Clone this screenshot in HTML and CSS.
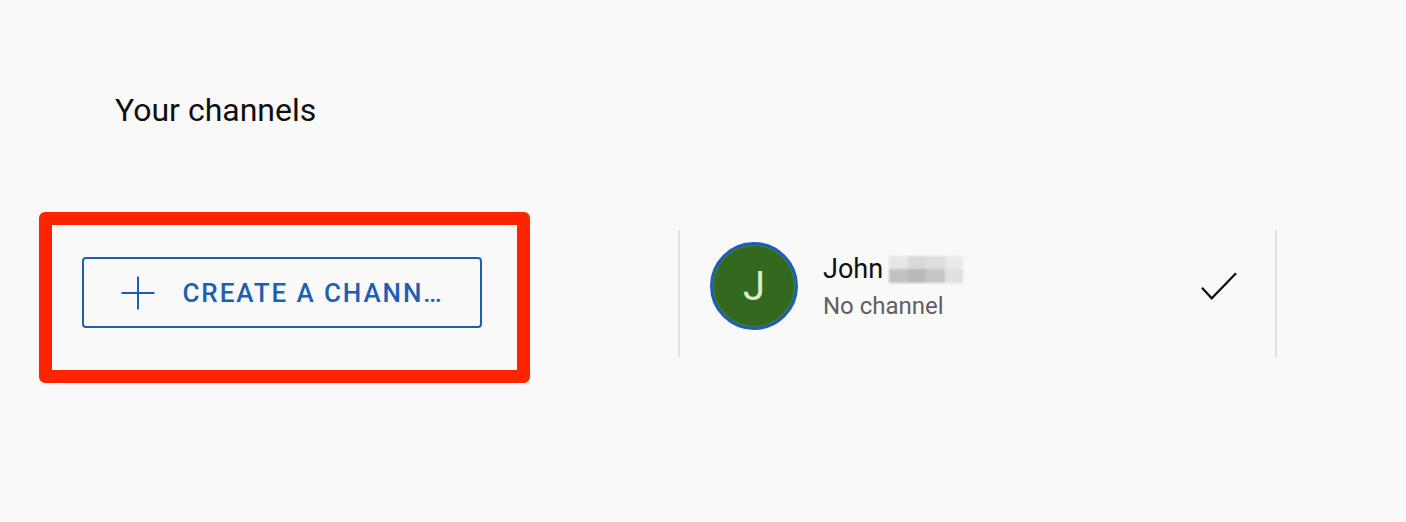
FILE: index.html
```html
<!DOCTYPE html>
<html lang="en">
<head>
<meta charset="utf-8">
<title>Your channels</title>
<link rel="stylesheet" href="styles.css">
</head>
<body>
<main class="page">
  <h1 class="title">Your channels</h1>
  <div class="row">
    <div class="annot">
      <button class="create-btn" type="button">
        <svg class="plus" width="34" height="34" viewBox="0 0 34 34" aria-hidden="true">
          <path d="M17 0.5V33.5M0.5 17H33.5" stroke="currentColor" stroke-width="2" fill="none"/>
        </svg>
        <span class="create-label">CREATE A CHANN…</span>
      </button>
    </div>
    <div class="account-card">
      <div class="avatar"><span>J</span></div>
      <div class="account-info">
        <div class="account-name">John <span class="blur" aria-hidden="true"><i></i><i></i><i></i><i></i><i></i><i></i><i></i><i></i></span></div>
        <div class="account-sub">No channel</div>
      </div>
      <svg class="check" width="36" height="28" viewBox="0 0 36 28" aria-hidden="true">
        <path d="M1 15.7L10.7 26.3L35 1.3" stroke="#0f0f0f" stroke-width="2.2" fill="none"/>
      </svg>
    </div>
  </div>
</main>
</body>
</html>
```

FILE: styles.css
```css
html, body {
  margin: 0;
  padding: 0;
  background: #f9f9f9;
}

body {
  font-family: Roboto, "Noto Sans", Arial, sans-serif;
  color: #0f0f0f;
  width: 1406px;
  height: 522px;
  overflow: hidden;
}

.page {
  display: flex;
  flex-direction: column;
}

.title {
  margin: 0;
  padding: 90px 0 0 115px;
  font-size: 32px;
  line-height: 40px;
  font-weight: 400;
  color: #0f0f0f;
}

.row {
  display: flex;
  align-items: flex-start;
  margin-top: 82px;
}

.annot {
  box-sizing: border-box;
  margin-left: 39px;
  width: 491px;
  height: 171px;
  border: 13.5px solid #ff2400;
  border-radius: 6px;
  padding: 32px 0 0 29.5px;
}

.create-btn {
  box-sizing: border-box;
  display: flex;
  align-items: center;
  width: 400px;
  height: 71px;
  padding: 0 0 0 37px;
  border: 2px solid #1f5fb3;
  border-radius: 4px;
  background: transparent;
  color: #1c5fb6;
  font-family: Roboto, "Noto Sans", Arial, sans-serif;
  cursor: pointer;
}

.plus {
  flex: none;
  color: #1d5db0;
}

.create-label {
  margin-left: 28px;
  font-size: 26px;
  font-weight: 500;
  letter-spacing: 1.9px;
  white-space: nowrap;
  line-height: 30px;
}

.account-card {
  box-sizing: border-box;
  display: flex;
  align-items: flex-start;
  margin-left: 148px;
  margin-top: 18px;
  width: 599px;
  height: 127px;
  padding: 12px 0 0 30px;
  border-left: 2px solid #e2e2e2;
  border-right: 2px solid #e2e2e2;
}

.avatar {
  box-sizing: border-box;
  flex: none;
  width: 88px;
  height: 88px;
  border-radius: 50%;
  border: 3px solid #1d5fb5;
  background: #33691e;
  box-shadow: inset 0 0 0 1px #4f7a45;
  display: flex;
  align-items: center;
  justify-content: center;
  color: #dcedc8;
  font-size: 40px;
  line-height: 1;
  padding-top: 2px;
}

.account-info {
  margin-left: 25px;
  margin-top: 11px;
  display: flex;
  flex-direction: column;
}

.account-name {
  font-size: 27px;
  line-height: 32px;
  color: #0f0f0f;
  display: flex;
  align-items: center;
  white-space: nowrap;
}

.blur {
  display: inline-grid;
  grid-template-columns: repeat(4, 18.5px);
  grid-template-rows: 13px 14px;
  margin-left: 6px;
  filter: blur(1.2px);
  opacity: 0.9;
}

.blur i:nth-child(1) { background: #e4e4e4; }
.blur i:nth-child(2) { background: #d6d6d6; }
.blur i:nth-child(3) { background: #dadada; }
.blur i:nth-child(4) { background: #e8e8e8; }
.blur i:nth-child(5) { background: #bdbdbd; }
.blur i:nth-child(6) { background: #b4b4b4; }
.blur i:nth-child(7) { background: #c2c2c2; }
.blur i:nth-child(8) { background: #dedede; }

.account-sub {
  margin-top: 5px;
  font-size: 24px;
  line-height: 32px;
  color: #606060;
}

.check {
  flex: none;
  margin-left: auto;
  margin-right: 38px;
  margin-top: 30px;
}
```
